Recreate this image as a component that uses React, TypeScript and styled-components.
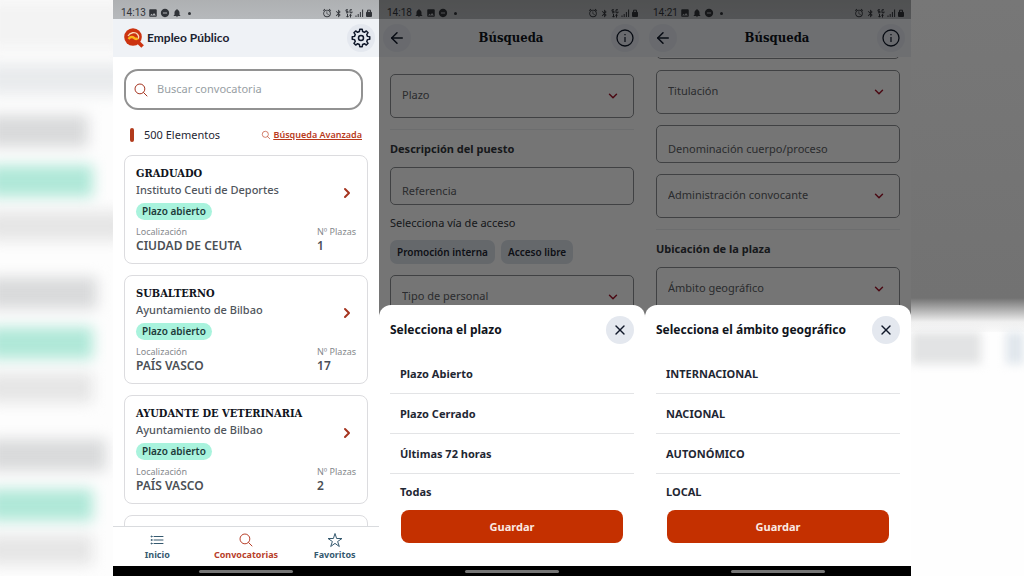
import React from "react";
import styled, { createGlobalStyle, css } from "styled-components";
import { IoSearchOutline, IoListOutline, IoStarOutline } from "react-icons/io5";
import {
  MdPhoto,
  MdDoNotDisturbOn,
  MdNotifications,
  MdAlarm,
  MdBluetooth,
} from "react-icons/md";
import { ArrowLeft, ChevronDown, ChevronRight, X } from "lucide-react";

const sans = `"Noto Sans", "Open Sans", sans-serif`;
const serif = `"DejaVu Serif Condensed", "DejaVu Serif", serif`;

const Global = createGlobalStyle`
  * { box-sizing: border-box; }
  body { margin: 0; background: #fff; font-family: ${sans}; color: #1f2733; }
  button, input, select { font: inherit; color: inherit; margin: 0; }
  h1, h2, h3, p, ul { margin: 0; padding: 0; }
  ul { list-style: none; }
`;

/* ---------- page ---------- */

const Page = styled.div`
  display: grid;
  grid-template-columns: 113fr repeat(3, 266fr) 113fr;
  grid-template-rows: minmax(0, 1fr);
  height: 100vh;
  overflow: hidden;
`;

const Side = styled.div`
  overflow: hidden;
  background: #fdfdfd;
`;

const Soft = styled.div`
  display: flex;
  flex-direction: column;
  filter: blur(7px);
`;

const Smear = styled.div<{ $w: number; $h: number; $color: string; $gap?: number }>`
  flex: none;
  width: ${(p) => p.$w + 10}%;
  height: ${(p) => p.$h}px;
  margin-top: ${(p) => p.$gap ?? 0}px;
  margin-left: -10%;
  background: ${(p) => p.$color};
`;

const SideRight = styled(Side)`
  background: #fefefe;
`;

const SideRightTop = styled.div`
  height: 332px;
  background: linear-gradient(#777, #727272 298px, #f0f0f0 322px, #fafafa);
`;

const SideRightBlobs = styled.div`
  display: flex;
  justify-content: space-between;
  filter: blur(5px);
`;

const Blob = styled.div<{ $w: number; $color: string }>`
  width: ${(p) => p.$w}%;
  height: 32px;
  background: ${(p) => p.$color};
`;

/* ---------- phone ---------- */

const Phone = styled.section`
  display: flex;
  flex-direction: column;
  min-width: 0;
  background: #fff;
  overflow: hidden;
`;

const Screen = styled.div`
  position: relative;
  flex: 1;
  min-height: 0;
  display: flex;
  flex-direction: column;
  overflow: hidden;
`;

const HomeBar = styled.div`
  flex: none;
  height: 10px;
  display: flex;
  align-items: center;
  justify-content: center;
  background: #000;
`;

const HomePill = styled.div`
  width: 35%;
  height: 3px;
  border-radius: 2px;
  background: #757575;
`;

const StatusRow = styled.div`
  position: relative;
  z-index: 1;
  flex: none;
  height: 19px;
  padding: 7px 7px 0 8px;
  display: flex;
  align-items: center;
  justify-content: space-between;
  background: linear-gradient(#aeb0b2, #b6b9bc);
  color: #303338;
  font: 10px/12px Roboto, sans-serif;
`;

const StatusGroup = styled.div<{ $gap: number }>`
  display: flex;
  align-items: center;
  gap: ${(p) => p.$gap}px;
`;

const Dot = styled.i`
  width: 3px;
  height: 3px;
  margin-left: 4px;
  border-radius: 50%;
  background: currentColor;
`;

const AppBar = styled.header<{ $inset?: number }>`
  position: relative;
  z-index: 1;
  flex: none;
  height: 38px;
  padding: 0 ${(p) => p.$inset ?? 4}px 0 4px;
  display: flex;
  align-items: center;
  justify-content: space-between;
  background: #eff2f6;
`;

const Brand = styled.div`
  display: flex;
  align-items: center;
  gap: 2px;
  padding-left: 7px;
  font: 700 12px/16px Lato, sans-serif;
  color: #1b2230;
`;

const BarTitle = styled.h1`
  font: 700 13px/18px ${serif};
  color: #10141c;
`;

const RoundButton = styled.button`
  flex: none;
  width: 28px;
  height: 28px;
  padding: 0;
  border: 0;
  border-radius: 50%;
  display: flex;
  align-items: center;
  justify-content: center;
  background: #e4e8ef;
  color: #10182a;
`;

/* ---------- list screen ---------- */

const ListBody = styled.main`
  flex: 1;
  min-height: 0;
  overflow: hidden;
  padding: 12px 11px 0;
`;

const SearchBox = styled.label`
  display: flex;
  align-items: center;
  gap: 8px;
  height: 41px;
  margin-right: 5px;
  padding: 0 7px;
  border: 2px solid #929292;
  border-radius: 14px;
  color: #a5341f;
`;

const SearchInput = styled.input`
  flex: 1;
  min-width: 0;
  padding: 0 0 2px;
  border: 0;
  outline: 0;
  background: none;
  color: #333;
  font-size: 11px;
  line-height: 16px;
  &::placeholder { color: #98a0a4; opacity: 1; }
`;

const CountRow = styled.div`
  display: flex;
  align-items: center;
  height: 16px;
  margin: 17px 6px 12px;
`;

const Marker = styled.i`
  width: 4px;
  height: 14px;
  margin-right: 10px;
  border-radius: 2px;
  background: #b23a1c;
`;

const Count = styled.h2`
  flex: 1;
  font-size: 11px;
  font-weight: 400;
  line-height: 16px;
`;

const AdvancedLink = styled.a`
  display: flex;
  align-items: center;
  gap: 3px;
  color: #b8391b;
  font-size: 9px;
  font-weight: 600;
  line-height: 12px;
  span { text-decoration: underline; }
`;

const Cards = styled.ul`
  display: grid;
  gap: 11px;
`;

const Card = styled.li`
  display: grid;
  grid-template-columns: 1fr auto;
  align-content: space-between;
  align-items: center;
  height: 109px;
  padding: 10px 11px;
  border: 1px solid #dcdcdf;
  border-radius: 8px;
  overflow: hidden;
`;

const CardTitle = styled.h3`
  font: 700 11px/16px ${serif};
  color: #10141c;
`;

const CardOrg = styled.p`
  font-size: 11px;
  font-weight: 500;
  line-height: 16px;
  color: #50555c;
`;

const Pill = styled.span`
  display: block;
  width: max-content;
  margin-top: 5px;
  padding: 0 6px;
  border-radius: 9px;
  background: #a9f3dd;
  color: #1d3b3a;
  font-size: 10px;
  font-weight: 600;
  line-height: 17px;
`;

const OpenButton = styled.button`
  display: flex;
  justify-self: end;
  padding: 0;
  margin-right: 1px;
  border: 0;
  background: none;
  color: #a5341f;
`;

const Fact = styled.p`
  display: grid;
  font-size: 9px;
  line-height: 12px;
  color: #85888c;
  b {
    font-size: 12px;
    font-weight: 600;
    line-height: 15px;
    color: #4b4f55;
  }
`;

const TabBar = styled.nav`
  flex: none;
  display: grid;
  grid-template-columns: repeat(3, 1fr);
  height: 40px;
  border-top: 1px solid #d9dbde;
  background: #fff;
`;

const Tab = styled.a<{ $active?: boolean }>`
  display: flex;
  flex-direction: column;
  align-items: center;
  padding-top: 5px;
  color: ${(p) => (p.$active ? "#b8402a" : "#35596f")};
  font-size: 9px;
  font-weight: 700;
  line-height: 13px;
  text-decoration: none;
`;

/* ---------- filter screens ---------- */

const FormBody = styled.main<{ $scrolled?: boolean }>`
  display: flex;
  flex-direction: column;
  gap: 11px;
  padding: 17px 11px 0;
  ${(p) =>
    p.$scrolled &&
    css`
      padding-top: 0;
      margin-top: -42px;
    `}
`;

const Rule = styled.hr`
  flex: none;
  width: 100%;
  height: 1px;
  margin: 0;
  border: 0;
  background: #eceef0;
`;

const SectionTitle = styled.h2`
  font-size: 11px;
  font-weight: 700;
  line-height: 15px;
  color: #33373d;
`;

const Hint = styled.p`
  font-size: 11px;
  line-height: 13px;
  color: #33373d;
`;

const Picker = styled.label`
  flex: none;
  display: grid;
  align-items: center;
  color: #a3142a;
  > * { grid-area: 1 / 1; }
  > svg { justify-self: end; margin-right: 14px; pointer-events: none; }
`;

const fieldBox = css`
  width: 100%;
  border: 1px solid #8b8e92;
  border-radius: 5px;
  outline: 0;
  background: none;
  color: #5d6166;
  font-size: 11px;
  line-height: 16px;
`;

const Select = styled.select`
  ${fieldBox}
  height: 44px;
  padding: 0 30px 2px 11px;
  appearance: none;
`;

const TextField = styled.input`
  ${fieldBox}
  flex: none;
  height: 38px;
  padding: 9px 11px 0;
  &::placeholder { color: #5d6166; opacity: 1; }
`;

const Chips = styled.div`
  display: flex;
  gap: 6px;
`;

const Chip = styled.button`
  height: 24px;
  padding: 0 7px;
  border: 0;
  border-radius: 7px;
  background: #dce2ea;
  color: #1f2733;
  font-size: 10px;
  font-weight: 600;
  line-height: 16px;
`;

const Scrim = styled.div`
  position: absolute;
  inset: 0;
  z-index: 2;
  background: rgba(0, 0, 0, 0.54);
`;

const Sheet = styled.div`
  position: absolute;
  left: 0;
  right: 0;
  bottom: 0;
  z-index: 3;
  padding: 11px 11px 23px;
  border-radius: 12px 12px 0 0;
  background: #fff;
`;

const SheetHead = styled.div`
  display: flex;
  align-items: center;
  justify-content: space-between;
  margin-bottom: 10px;
`;

const SheetTitle = styled.h2`
  font-size: 12px;
  font-weight: 700;
  line-height: 18px;
  color: #10141c;
`;

const Option = styled.button`
  display: block;
  width: 100%;
  height: 39px;
  padding: 0 10px;
  border: 0;
  background: none;
  text-align: left;
  font-size: 11px;
  font-weight: 700;
  line-height: 16px;
`;

const Options = styled.ul`
  li { border-bottom: 1px solid #e3e4e6; }
  li:last-child { border: 0; }
  li:last-child ${Option} { height: 36px; }
`;

const SaveButton = styled.button`
  display: block;
  width: calc(100% - 22px);
  height: 33px;
  margin: 0 11px;
  border: 0;
  border-radius: 8px;
  background: #c43000;
  color: #fbe9e2;
  font-size: 11px;
  font-weight: 700;
  line-height: 16px;
`;

/* ---------- drawings ---------- */

const Logo = () => (
  <svg width="21" height="21" viewBox="0 0 21 21" aria-hidden="true">
    <circle cx="9" cy="9" r="8.8" fill="#cc3310" />
    <path d="M13 13l5.6 5.6" stroke="#cc3310" strokeWidth="3.6" />
    <path d="M4 8c2-3.600 7-4.500 9.500-1.800 1.300 1.500 1.300 3.500.4 4.800" fill="none" stroke="#f9d9b8" strokeWidth="1.300" />
    <path d="M4.500 11c2-2.500 4.500-2 6-.8 1.200.9 2.500.8 3.300 0" fill="none" stroke="#fbb61a" strokeWidth="2.400" />
  </svg>
);

const gearPath = (() => {
  const teeth = 8;
  const at = (deg: number, r: number) => {
    const a = ((deg - 90) * Math.PI) / 180;
    return `${(12 + r * Math.cos(a)).toFixed(2)} ${(12 + r * Math.sin(a)).toFixed(2)}`;
  };
  const points: string[] = [];
  for (let i = 0; i < teeth; i++) {
    const c = (360 / teeth) * i;
    points.push(at(c - 14, 8), at(c - 8, 10.6), at(c + 8, 10.6), at(c + 14, 8));
  }
  return `M${points.join("L")}Z`;
})();

const GearIcon = () => (
  <svg width="20" height="20" viewBox="0 0 24 24" fill="none" stroke="currentColor" strokeWidth="1.8" strokeLinejoin="round" aria-hidden="true">
    <path d={gearPath} />
    <circle cx="12" cy="12" r="3" />
  </svg>
);

const InfoIcon = () => (
  <svg width="18" height="18" viewBox="0 0 18 18" fill="none" stroke="currentColor" aria-hidden="true">
    <circle cx="9" cy="9" r="8" strokeWidth="1.300" />
    <path d="M9 8v5M9 5v1.300" strokeWidth="1.200" />
  </svg>
);

const NetIcon = () => (
  <svg width="8" height="9" viewBox="0 0 8 9" fill="none" stroke="currentColor" strokeWidth="1" aria-hidden="true">
    <path d="M3 .8H1v1.500h2v1.500H1M7 .8H5v3h2V2.500M2.500 5v3M1.500 7l1 1.200 1-1.200M5.500 8.500v-3M4.500 6.500l1-1.200 1 1.200" />
  </svg>
);

const SignalIcon = () => (
  <svg width="9" height="8" viewBox="0 0 9 8" stroke="currentColor" strokeWidth="1" aria-hidden="true">
    <path d="M1 8V6.500M3.200 8V5M5.400 8V3M7.600 8V.5" />
  </svg>
);

const BatteryIcon = () => (
  <svg width="6" height="8" viewBox="0 0 6 8" aria-hidden="true">
    <path d="M1.500 3V1.200h3V3" fill="none" stroke="currentColor" />
    <rect y="2.800" width="6" height="5.200" rx="1" fill="currentColor" />
  </svg>
);

type Mark = "photo" | "dnd" | "bell";

const marks: Record<Mark, React.ReactNode> = {
  photo: <MdPhoto size={10} />,
  dnd: <MdDoNotDisturbOn size={10} />,
  bell: <MdNotifications size={10} />,
};

const StatusBar = ({ time, icons }: { time: string; icons: Mark[] }) => (
  <StatusRow>
    <StatusGroup $gap={2}>
      <span>{time}</span>
      {icons.map((k) => (
        <React.Fragment key={k}>{marks[k]}</React.Fragment>
      ))}
      <Dot />
    </StatusGroup>
    <StatusGroup $gap={2}>
      <MdAlarm size={10} />
      <MdBluetooth size={9} />
      <NetIcon />
      <SignalIcon />
      <BatteryIcon />
    </StatusGroup>
  </StatusRow>
);

/* ---------- parts ---------- */

const jobs = [
  { title: "GRADUADO", org: "Instituto Ceuti de Deportes", place: "CIUDAD DE CEUTA", seats: 1 },
  { title: "SUBALTERNO", org: "Ayuntamiento de Bilbao", place: "PAÍS VASCO", seats: 17 },
  { title: "AYUDANTE DE VETERINARIA", org: "Ayuntamiento de Bilbao", place: "PAÍS VASCO", seats: 2 },
];

const PickerField = ({ label }: { label: string }) => (
  <Picker>
    <Select aria-label={label || "Tipo de proceso"} defaultValue="">
      <option value="">{label}</option>
    </Select>
    <ChevronDown size={14} strokeWidth={2.5} />
  </Picker>
);

const SearchHeader = () => (
  <AppBar $inset={6}>
    <RoundButton aria-label="Volver">
      <ArrowLeft size={18} />
    </RoundButton>
    <BarTitle>Búsqueda</BarTitle>
    <RoundButton aria-label="Información">
      <InfoIcon />
    </RoundButton>
  </AppBar>
);

const OptionSheet = ({ title, options }: { title: string; options: string[] }) => (
  <>
    <Scrim />
    <Sheet role="dialog" aria-label={title}>
      <SheetHead>
        <SheetTitle>{title}</SheetTitle>
        <RoundButton aria-label="Cerrar">
          <X size={16} />
        </RoundButton>
      </SheetHead>
      <Options>
        {options.map((o) => (
          <li key={o}>
            <Option>{o}</Option>
          </li>
        ))}
      </Options>
      <SaveButton>Guardar</SaveButton>
    </Sheet>
  </>
);

const Device = ({ children }: { children: React.ReactNode }) => (
  <Phone>
    <Screen>{children}</Screen>
    <HomeBar>
      <HomePill />
    </HomeBar>
  </Phone>
);

export default function App() {
  return (
    <Page>
      <Global />
      <Side>
        <Soft>
          <Smear $w={110} $h={50} $color="#f3f3f3" />
          <Smear $w={110} $h={32} $color="#e9ebed" $gap={13} />
          {[0, 1, 2].map((i) => (
            <React.Fragment key={i}>
              <Smear $w={78 + i * 8} $h={32} $color="#d9dadb" $gap={i ? 36 : 20} />
              <Smear $w={82} $h={32} $color="#b0e8d8" $gap={18} />
              <Smear $w={i ? 82 : 110} $h={30} $color="#e6e6e6" $gap={14} />
            </React.Fragment>
          ))}
        </Soft>
      </Side>

      <Device>
        <StatusBar time="14:13" icons={["photo", "dnd", "bell"]} />
        <AppBar>
          <Brand>
            <Logo />
            Empleo Público
          </Brand>
          <RoundButton aria-label="Ajustes">
            <GearIcon />
          </RoundButton>
        </AppBar>
        <ListBody>
          <SearchBox>
            <IoSearchOutline size={16} />
            <SearchInput aria-label="Buscar convocatoria" placeholder="Buscar convocatoria" />
          </SearchBox>
          <CountRow>
            <Marker />
            <Count>500 Elementos</Count>
            <AdvancedLink href="#avanzada">
              <IoSearchOutline size={10} />
              <span>Búsqueda Avanzada</span>
            </AdvancedLink>
          </CountRow>
          <Cards>
            {jobs.map((j) => (
              <Card key={j.title}>
                <div>
                  <CardTitle>{j.title}</CardTitle>
                  <CardOrg>{j.org}</CardOrg>
                  <Pill>Plazo abierto</Pill>
                </div>
                <OpenButton aria-label={`Abrir ${j.title}`}>
                  <ChevronRight size={16} strokeWidth={3} />
                </OpenButton>
                <Fact>
                  Localización<b>{j.place}</b>
                </Fact>
                <Fact>
                  Nº Plazas<b>{j.seats}</b>
                </Fact>
              </Card>
            ))}
            <Card />
          </Cards>
        </ListBody>
        <TabBar>
          <Tab href="#inicio">
            <IoListOutline size={16} />
            Inicio
          </Tab>
          <Tab href="#convocatorias" $active>
            <IoSearchOutline size={16} />
            Convocatorias
          </Tab>
          <Tab href="#favoritos">
            <IoStarOutline size={16} />
            Favoritos
          </Tab>
        </TabBar>
      </Device>

      <Device>
        <StatusBar time="14:18" icons={["bell", "photo", "dnd"]} />
        <SearchHeader />
        <FormBody>
          <PickerField label="Plazo" />
          <Rule />
          <SectionTitle>Descripción del puesto</SectionTitle>
          <TextField aria-label="Referencia" placeholder="Referencia" />
          <Hint>Selecciona vía de acceso</Hint>
          <Chips>
            <Chip>Promoción interna</Chip>
            <Chip>Acceso libre</Chip>
          </Chips>
          <PickerField label="Tipo de personal" />
        </FormBody>
        <OptionSheet
          title="Selecciona el plazo"
          options={["Plazo Abierto", "Plazo Cerrado", "Últimas 72 horas", "Todas"]}
        />
      </Device>

      <Device>
        <StatusBar time="14:21" icons={["photo", "bell", "dnd"]} />
        <SearchHeader />
        <FormBody $scrolled>
          <PickerField label="" />
          <PickerField label="Titulación" />
          <TextField aria-label="Denominación cuerpo/proceso" placeholder="Denominación cuerpo/proceso" />
          <PickerField label="Administración convocante" />
          <Rule />
          <SectionTitle>Ubicación de la plaza</SectionTitle>
          <PickerField label="Ámbito geográfico" />
        </FormBody>
        <OptionSheet
          title="Selecciona el ámbito geográfico"
          options={["INTERNACIONAL", "NACIONAL", "AUTONÓMICO", "LOCAL"]}
        />
      </Device>

      <SideRight>
        <SideRightTop />
        <SideRightBlobs>
          <Blob $w={62} $color="#e2e3e4" />
          <Blob $w={16} $color="#e0e6ec" />
        </SideRightBlobs>
      </SideRight>
    </Page>
  );
}
